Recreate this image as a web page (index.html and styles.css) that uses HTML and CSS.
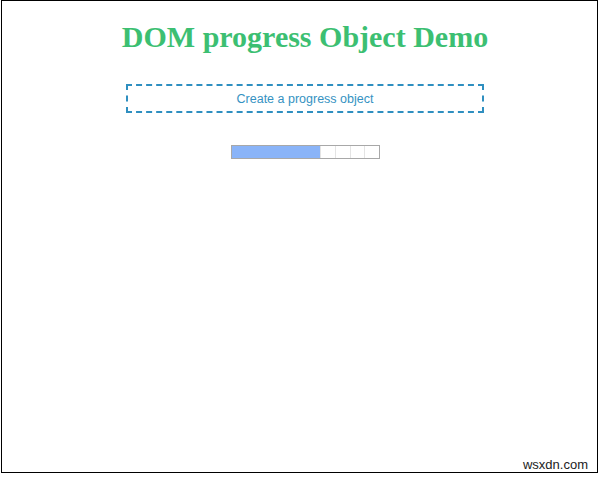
FILE: index.html
```html
<!DOCTYPE html>
<html>
<head>
<meta charset="utf-8">
<link rel="stylesheet" href="styles.css">
</head>
<body>
<div class="frame">
  <h1 class="title">DOM progress Object Demo</h1>
  <button class="create-btn">Create a progress object</button>
  <div class="progress">
    <div class="progress-fill"></div>
    <div class="seg"></div>
    <div class="seg"></div>
    <div class="seg"></div>
    <div class="seg"></div>
  </div>
  <span class="watermark">wsxdn.com</span>
</div>
</body>
</html>
```
FILE: styles.css
```css
html, body {
  margin: 0;
  padding: 0;
  background: #fff;
}
.frame {
  position: relative;
  box-sizing: border-box;
  margin-left: 1px;
  width: 597px;
  height: 473px;
  border: 1px solid #000;
  display: flex;
  flex-direction: column;
  align-items: center;
  padding-left: 11px;
}
.title {
  margin: 19px 0 0 0;
  font-family: "Liberation Serif", serif;
  font-weight: bold;
  font-size: 30px;
  line-height: 34px;
  color: #3cbf72;
}
.create-btn {
  margin-top: 30px;
  box-sizing: border-box;
  width: 358px;
  height: 29px;
  background: #fff;
  border: 2px dashed #2f8fc0;
  font-family: "Liberation Sans", Arial, sans-serif;
  font-size: 12.5px;
  color: #3592c2;
  padding: 0;
}
.progress {
  margin-top: 32px;
  margin-left: 1px;
  box-sizing: border-box;
  width: 149px;
  height: 14px;
  border: 1px solid #a8a8a8;
  display: flex;
  background: #fff;
}
.progress-fill {
  width: 88px;
  background: #8ab4f8;
}
.seg {
  flex: 1;
  border-left: 1px solid #e4e4e4;
}
.watermark {
  position: absolute;
  right: 9px;
  bottom: 0px;
  font-family: "Liberation Sans", Arial, sans-serif;
  font-size: 13px;
  color: #222;
}
```
